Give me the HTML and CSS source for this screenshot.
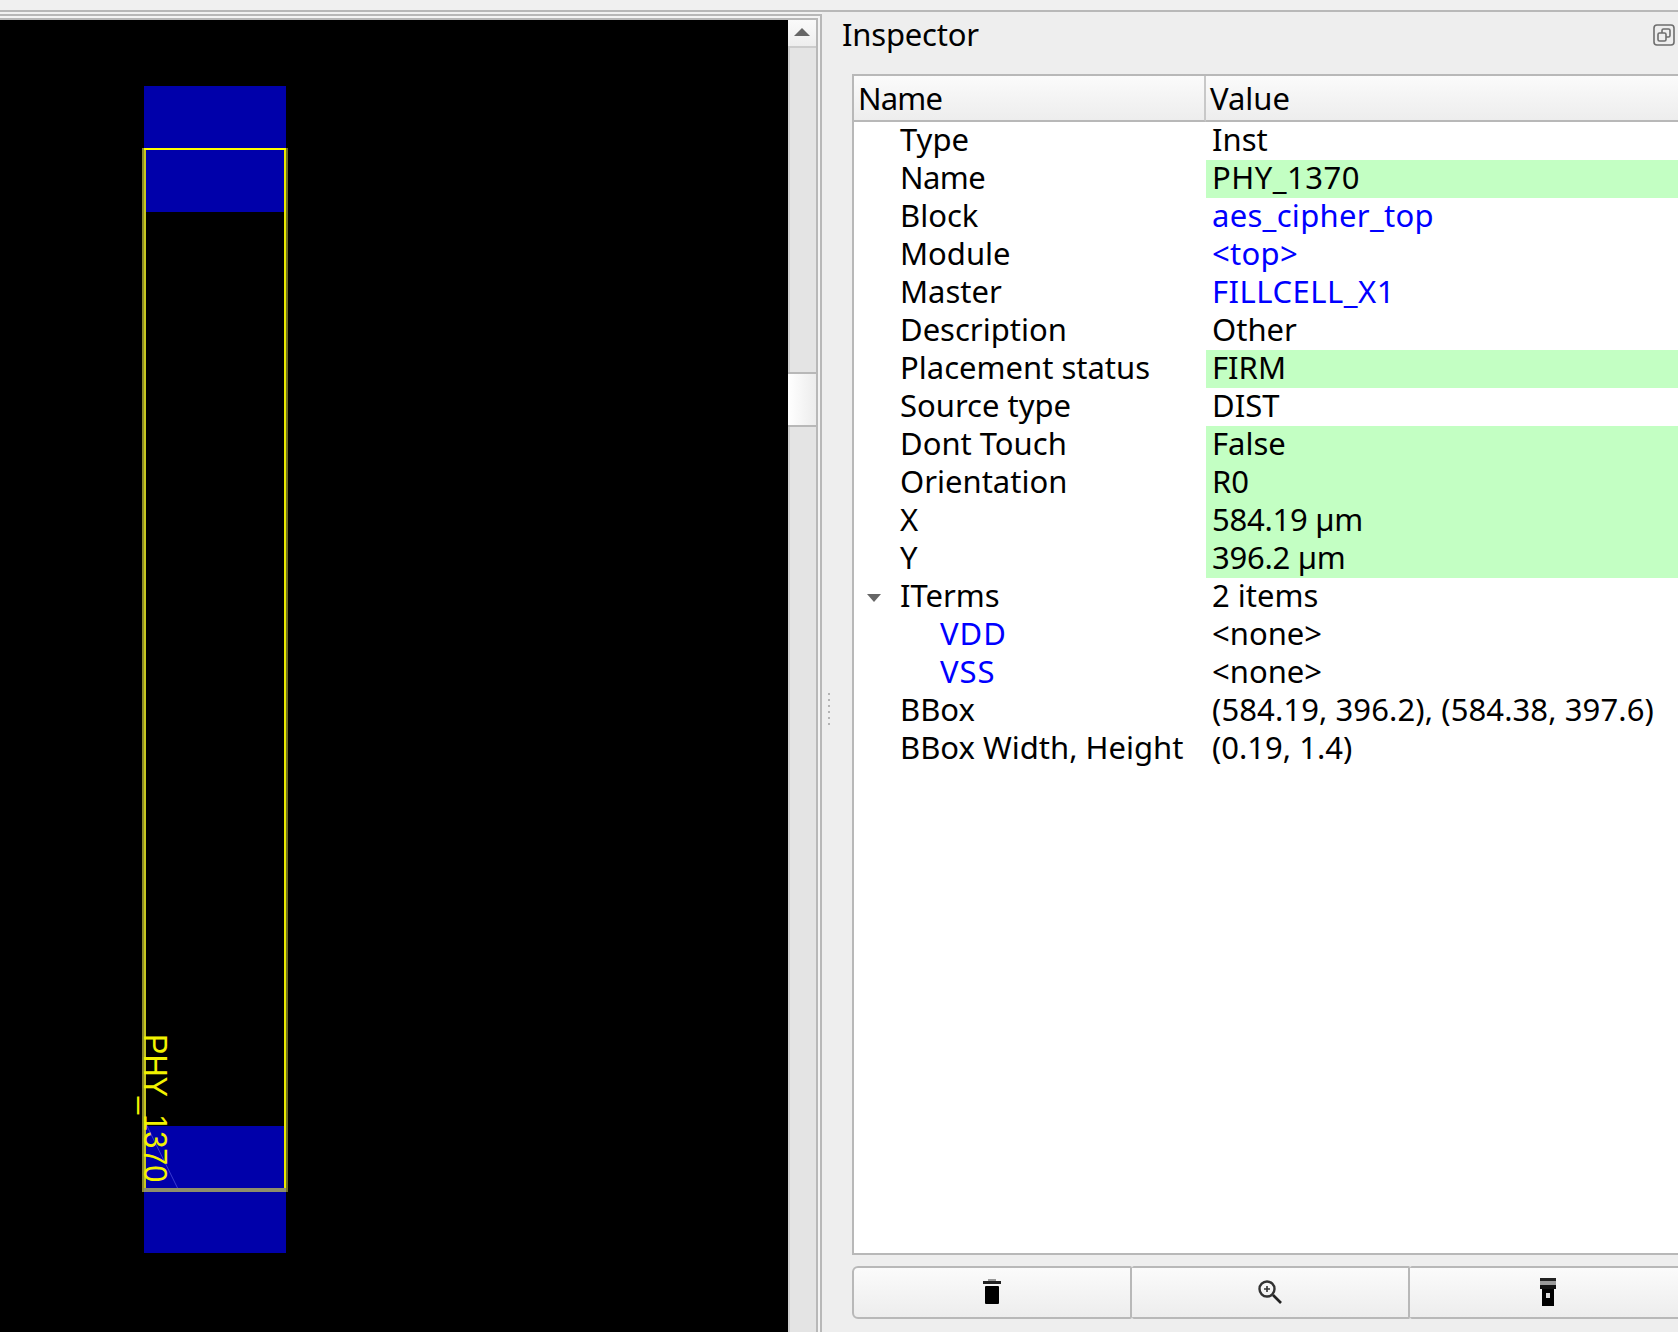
FILE: index.html
```html
<!DOCTYPE html>
<html lang="en">
<head>
  <meta charset="UTF-8">
  <title>Inspector</title>
  <link rel="stylesheet" href="styles.css">
</head>
<body>
  <div class="menu-strip"></div>

  <div class="main">
    <!-- Layout viewer -->
    <div class="viewer">
      <div class="viewer-outer">
        <div class="viewer-inner">
          <svg class="canvas" width="788" height="1312" viewBox="0 20 788 1312">
            <rect x="0" y="20" width="788" height="1312" fill="#000"/>
            <rect x="144" y="86" width="142" height="126" fill="#0000aa"/>
            <rect x="144" y="1126" width="142" height="127" fill="#0000aa"/>
            <line x1="146" y1="1124" x2="178" y2="1189" stroke="#3a3ad0" stroke-width="1"/>
            <rect x="142" y="148" width="2" height="1044" fill="#8c8c2a"/>
            <rect x="144" y="148" width="2" height="1044" fill="#c8c81e"/>
            <rect x="284" y="148" width="2" height="1044" fill="#e8e800"/>
            <rect x="286" y="148" width="2" height="1044" fill="#6e6e22"/>
            <rect x="144" y="148" width="142" height="2" fill="#ffff00"/>
            <rect x="144" y="1188" width="142" height="4" fill="#8e8e6a"/>
            <text class="inst-label" transform="translate(144 1034) rotate(90) scale(0.93 1)">PHY_1370</text>
          </svg>
          <div class="scrollbar">
            <div class="scroll-btn"><span class="arrow-up"></span></div>
            <div class="scroll-thumb"></div>
          </div>
        </div>
      </div>
    </div>

    <!-- Inspector dock -->
    <div class="dock">
      <div class="splitter"><span class="grip"></span></div>
      <div class="panel">
        <div class="panel-title">
          <span>Inspector</span>
          <svg class="float-icon" width="22" height="22" viewBox="0 0 22 22" fill="none" stroke="#6e6e6e" stroke-width="1.6">
            <rect x="1" y="1" width="20" height="20" rx="3"/>
            <rect x="9" y="5" width="8" height="8" rx="1.5"/>
            <rect x="5" y="9" width="8" height="8" rx="1.5" fill="#eee"/>
          </svg>
        </div>

        <div class="prop-box">
          <table class="props">
            <thead>
              <tr><th class="col-name">Name</th><th>Value</th></tr>
            </thead>
            <tbody>
              <tr><td class="lvl1">Type</td><td>Inst</td></tr>
              <tr><td class="lvl1 tight">Name</td><td class="edit wide">PHY_1370</td></tr>
              <tr><td class="lvl1">Block</td><td class="link">aes_cipher_top</td></tr>
              <tr><td class="lvl1">Module</td><td class="link">&lt;top&gt;</td></tr>
              <tr><td class="lvl1">Master</td><td class="link wide">FILLCELL_X1</td></tr>
              <tr><td class="lvl1">Description</td><td>Other</td></tr>
              <tr><td class="lvl1">Placement status</td><td class="edit">FIRM</td></tr>
              <tr><td class="lvl1">Source type</td><td>DIST</td></tr>
              <tr><td class="lvl1">Dont Touch</td><td class="edit">False</td></tr>
              <tr><td class="lvl1">Orientation</td><td class="edit">R0</td></tr>
              <tr><td class="lvl1">X</td><td class="edit tight-num">584.19 µm</td></tr>
              <tr><td class="lvl1">Y</td><td class="edit tight-num">396.2 µm</td></tr>
              <tr><td class="lvl1"><span class="arrow-down"></span>ITerms</td><td>2 items</td></tr>
              <tr><td class="lvl2 link">VDD</td><td>&lt;none&gt;</td></tr>
              <tr><td class="lvl2 link">VSS</td><td>&lt;none&gt;</td></tr>
              <tr><td class="lvl1">BBox</td><td class="bbox">(584.19, 396.2), (584.38, 397.6)</td></tr>
              <tr><td class="lvl1">BBox Width, Height</td><td>(0.19, 1.4)</td></tr>
            </tbody>
          </table>
        </div>

        <div class="actions">
          <button class="tool-btn">
            <svg width="18" height="26" viewBox="0 0 18 26">
              <rect x="5" y="0" width="8" height="2" fill="#999"/>
              <rect x="0" y="2" width="18" height="3" fill="#222"/>
              <rect x="2" y="7" width="14" height="18" rx="1" fill="#000"/>
            </svg>
          </button>
          <button class="tool-btn">
            <svg width="26" height="26" viewBox="0 0 26 26" fill="none">
              <circle cx="10" cy="10" r="7.5" stroke="#333" stroke-width="2.4"/>
              <path d="M10 7v6M7 10h6" stroke="#333" stroke-width="1.6"/>
              <path d="M16 16l8 8" stroke="#222" stroke-width="2.6"/>
            </svg>
          </button>
          <button class="tool-btn">
            <svg width="16" height="28" viewBox="0 0 16 28">
              <rect x="0" y="0" width="16" height="3" fill="#222"/>
              <rect x="0" y="3" width="16" height="4" fill="#999"/>
              <rect x="0" y="7" width="16" height="4" fill="#111"/>
              <rect x="2" y="11" width="12" height="17" fill="#000"/>
              <rect x="6" y="15" width="4" height="5" fill="#ddd"/>
            </svg>
          </button>
        </div>
      </div>
    </div>
  </div>
</body>
</html>
```

FILE: styles.css
```css
html, body {
  margin: 0;
  height: 100%;
}

body {
  display: flex;
  flex-direction: column;
  overflow: hidden;
  background: #eeeeee;
  color: #000;
  font-family: "Noto Sans", sans-serif;
  font-size: 31px;
}

.menu-strip {
  height: 10px;
  flex: none;
  background: #f0f0f0;
}

.main {
  display: flex;
  flex: 1;
  min-height: 0;
}

/* Viewer side: three stacked frame lines */
.viewer {
  width: 822px;
  flex: none;
  display: flex;
  padding-top: 2px;
  border-top: 2px solid #b8b8b8;
  box-sizing: border-box;
  background: #f2f2f2;
}

.viewer-outer {
  flex: 1;
  display: flex;
  padding: 2px 2px 0 0;
  border-top: 2px solid #b8b8b8;
  border-right: 2px solid #b8b8b8;
  background: #f4f4f4;
}

.viewer-inner {
  flex: 1;
  display: flex;
  border-top: 2px solid #b8b8b8;
  border-right: 2px solid #b8b8b8;
}

.canvas {
  display: block;
  flex: none;
}

.inst-label {
  font-family: "Liberation Sans", sans-serif;
  font-size: 33px;
  fill: #f2f200;
}

.scrollbar {
  width: 28px;
  flex: none;
  background: #e4e4e4;
  border-left: 2px solid #cfcfcf;
  box-sizing: border-box;
}

.scroll-btn {
  height: 28px;
  margin-left: -2px;
  display: flex;
  justify-content: center;
  padding-top: 8px;
  box-sizing: border-box;
  background: linear-gradient(#fafafa, #eeeeee);
  border-bottom: 2px solid #cccccc;
}

.arrow-up {
  width: 0;
  height: 0;
  border-left: 8px solid transparent;
  border-right: 8px solid transparent;
  border-bottom: 8px solid #666;
}

.scroll-thumb {
  height: 51px;
  margin-top: 324px;
  margin-left: -2px;
  border-top: 2px solid #b8b8b8;
  border-bottom: 2px solid #b8b8b8;
  background: linear-gradient(90deg, #ffffff, #ececec);
}

/* Dock side */
.dock {
  flex: 1;
  display: flex;
  min-width: 0;
  border-top: 2px solid #b8b8b8;
  background: #eeeeee;
}

.splitter {
  width: 30px;
  flex: none;
  padding: 681px 0 0 6px;
  box-sizing: border-box;
}

.grip {
  display: block;
  width: 2px;
  height: 32px;
  background: repeating-linear-gradient(#b4b4b4 0, #b4b4b4 2px, transparent 2px, transparent 6px);
}

.panel {
  width: 837px;
  flex: none;
  display: flex;
  flex-direction: column;
}

.panel-title {
  width: 836px;
  height: 62px;
  flex: none;
  display: flex;
  justify-content: space-between;
  margin-left: -10px;
  letter-spacing: -0.2px;
  line-height: 44px;
}

.float-icon {
  margin: 12px 3px 0 0;
  flex: none;
}

.prop-box {
  flex: 1;
  min-height: 0;
  background: #fff;
  border: 2px solid #b8b8b8;
}

.props {
  width: 100%;
  table-layout: fixed;
  border-collapse: separate;
  border-spacing: 0;
}

.props th {
  height: 44px;
  padding: 0 0 0 4px;
  text-align: left;
  font-weight: normal;
  line-height: 44px;
  background: linear-gradient(#fbfbfb, #ededed);
  border-bottom: 2px solid #b8b8b8;
}

.props th.col-name {
  width: 352px;
  box-sizing: border-box;
  padding-left: 4px;
  letter-spacing: -0.8px;
  border-right: 2px solid #c8c8c8;
}

.props td {
  height: 34px;
  padding: 0 0 4px 6px;
  line-height: 34px;
  white-space: nowrap;
}

.props td.lvl1 {
  padding-left: 46px;
}

.props td.lvl2 {
  padding-left: 86px;
  letter-spacing: 1px;
}

.props .edit {
  background: #c3ffc3;
}

.props .link {
  color: #0000ff;
  letter-spacing: 0.3px;
}

.props .wide {
  letter-spacing: 0.5px;
}

.props .tight {
  letter-spacing: -0.6px;
}

.props .tight-num {
  letter-spacing: -0.25px;
}

.props .bbox {
  letter-spacing: 0.1px;
}

.arrow-down {
  display: inline-block;
  width: 0;
  height: 0;
  margin: 0 19px 2px -33px;
  vertical-align: middle;
  border-left: 7.5px solid transparent;
  border-right: 7.5px solid transparent;
  border-top: 8px solid #666;
}

.actions {
  display: flex;
  flex: none;
  margin: 11px 0 13px;
}

.tool-btn {
  width: 278px;
  height: 53px;
  padding: 0 0 2px;
  display: flex;
  align-items: center;
  justify-content: center;
  background: linear-gradient(#fbfbfb, #ededed);
  border: 2px solid #b8b8b8;
  border-left-width: 0;
  border-radius: 2px;
}

.tool-btn:first-child {
  width: 280px;
  border-left-width: 2px;
  border-radius: 6px 2px 2px 6px;
}
```
